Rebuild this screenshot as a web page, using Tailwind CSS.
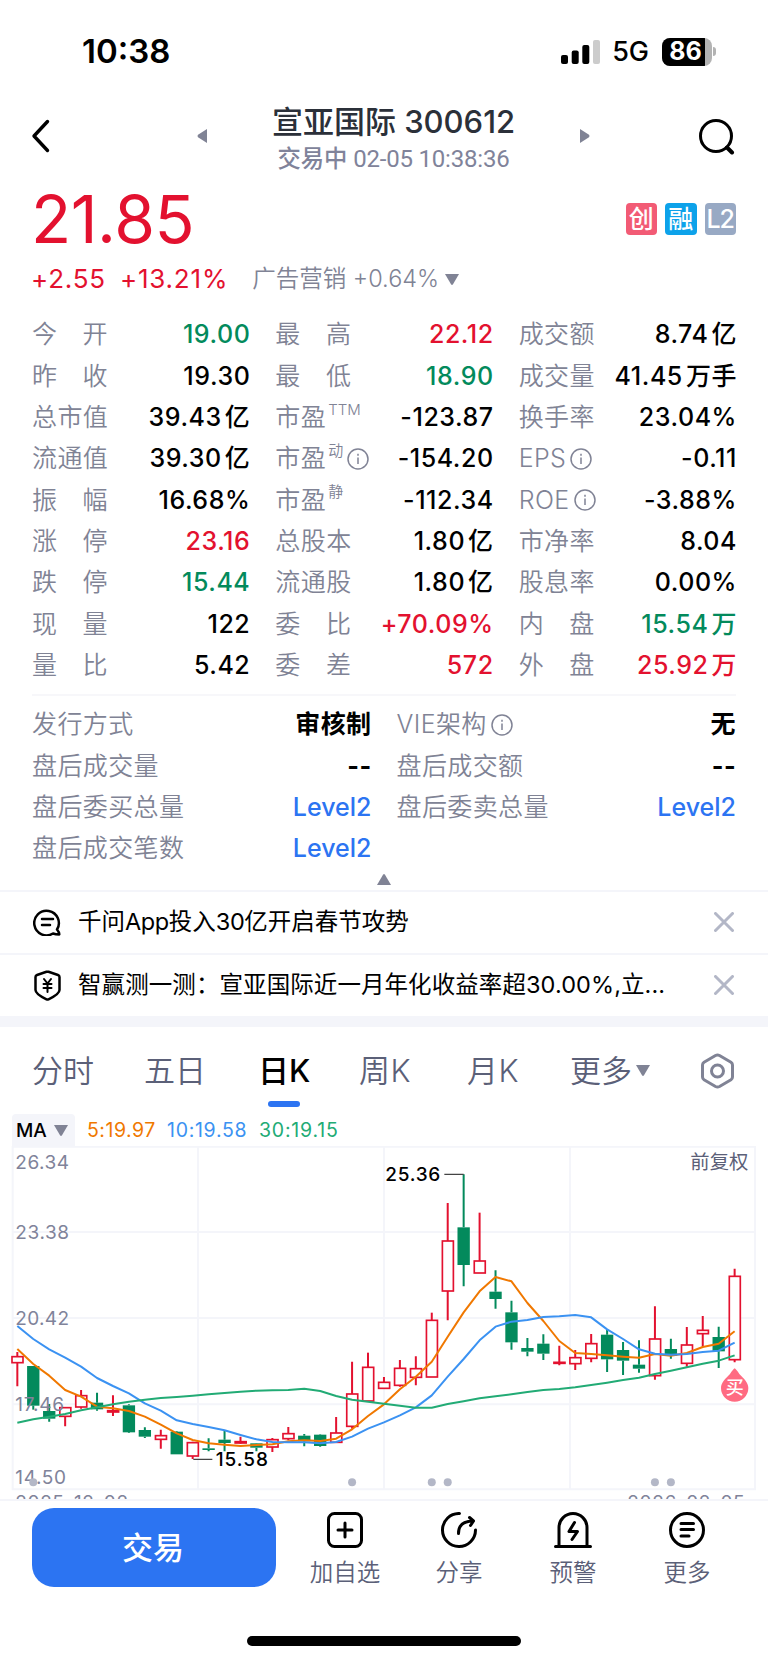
<!DOCTYPE html>
<html lang="zh-CN">

<head>
    <meta charset="UTF-8">
    <meta name="viewport" content="width=device-width, initial-scale=1.0">
    <title>宣亚国际 300612</title>
    <script src="https://cdn.jsdelivr.net/npm/@tailwindcss/browser@4"></script>
</head>

<body class="bg-white">
    <div class="w-[768px] h-[1663px] flex flex-col overflow-hidden bg-white text-black leading-none whitespace-nowrap font-[Inter,'Noto_Sans_CJK_SC',sans-serif]">

        <!-- Status bar -->
        <div class="h-[103px] shrink-0 flex justify-between items-center pl-[82px] pr-[52px]">
            <div class="text-[33px] font-semibold">10:38</div>
            <div class="flex items-center">
                <svg class="w-[39px] h-6" viewBox="0 0 39 24">
                    <rect x="0" y="15" width="7" height="9" rx="2" />
                    <rect x="10.7" y="10.5" width="7" height="13.5" rx="2" />
                    <rect x="21.3" y="5" width="7" height="19" rx="2" />
                    <rect x="32" y="0" width="7" height="24" rx="2" fill="#cccccc" />
                </svg>
                <div class="ml-3 text-[27px] font-[450]">5G</div>
                <div class="ml-[13px] w-[50px] h-7 rounded-lg overflow-hidden bg-[#b3b3b3] flex">
                    <div class="w-[43px] bg-black text-white text-[25px] font-bold flex items-center justify-center pl-1">86</div>
                </div>
                <div class="ml-[1px] w-[3px] h-[9px] rounded-r-full bg-[#b3b3b3]"></div>
            </div>
        </div>

        <!-- Title -->
        <header class="h-[75px] shrink-0 flex items-center pl-[30px] pr-[33px]">
            <svg class="w-[21px] h-9 mt-[-9px]" viewBox="0 0 21 36" fill="none" stroke="#000" stroke-width="3.4" stroke-linecap="round" stroke-linejoin="round">
                <path d="M17.5 3.500 4 18 17.500 32.500" />
            </svg>
            <div class="ml-[146px] flex items-center justify-between w-[393px]">
                <svg class="w-[10px] h-[14px] mt-[-9px]" viewBox="0 0 10 14" fill="#808395"><path d="M10 0v14L1 8.2Q0 7 1 5.8Z" /></svg>
                <div class="flex flex-col items-center">
                    <div class="text-[31px] font-medium text-[#2b3039]">宣亚国际 <span>300612</span></div>
                    <div class="mt-[6px] text-[23.3px] font-[450] text-[#80839a] font-[Roboto,'Noto_Sans_CJK_SC',sans-serif]">交易中 <span class="text-2xl tracking-[-0.2px]">02-05 10:38:36</span></div>
                </div>
                <svg class="w-[10px] h-[14px] mt-[-9px]" viewBox="0 0 10 14" fill="#808395"><path d="M0 0v14L9 8.2Q10 7 9 5.8Z" /></svg>
            </div>
            <svg class="ml-auto w-9 h-9 mt-[-8px]" viewBox="0 0 36 36" fill="none" stroke="#000" stroke-width="3" stroke-linecap="round">
                <circle cx="17" cy="17" r="15.500" />
                <path d="m28 28.500 5 5" stroke-width="4" />
            </svg>
        </header>

        <!-- Price -->
        <section class="h-[132px] shrink-0 pl-8 pr-[32px]">
            <div class="h-[82px] flex items-center justify-between">
                <div class="text-[66px] tracking-[-0.5px] -ml-px text-[#e3112f]">21.85</div>
                <div class="flex gap-2 text-white font-medium">
                    <span class="w-[31.5px] h-8 rounded bg-[#f25b75] flex items-center justify-center text-[25px]">创</span>
                    <span class="w-[31.5px] h-8 rounded bg-[#0da2ea] flex items-center justify-center text-[25px]">融</span>
                    <span class="w-[31.5px] h-8 rounded bg-[#98a9c4] flex items-center justify-center text-[25px] tracking-[-1px]">L2</span>
                </div>
            </div>
            <div class="h-[38px] flex items-center text-[26px] tracking-[0.8px] text-[#e3112f]">
                <span class="-ml-px">+2.55</span>
                <span class="ml-[14px]">+13.21%</span>
                <span class="ml-6 text-[23.5px] tracking-normal font-[350] text-[#808395]">广告营销 +0.64%</span>
                <svg class="ml-[6px] w-[14px] h-[11px]" viewBox="0 0 14 11" fill="#808395"><path d="M0 0h14L8 10.3Q7 11.5 6 10.3Z" /></svg>
            </div>
        </section>

        <!-- Quote grid, filled below -->
        <section class="h-[384px] shrink-0 px-8">
            <div id="quotes" class="mt-[4px] grid grid-cols-3 gap-x-[26px] text-[25px] tracking-[0.4px]"></div>
        </section>

        <section class="h-[196px] shrink-0 mx-8 border-t-2 border-[#f7f7fa]">
            <div id="extras" class="mt-[8px] grid grid-cols-2 gap-x-[25px] text-[25px] tracking-[0.4px]"></div>
            <svg class="mx-auto mt-[5px] w-[14px] h-[11px]" viewBox="0 0 14 11" fill="#808395"><path d="M0 11h14L8 .7Q7-.5 6 .7Z" /></svg>
        </section>

        <!-- Notices -->
        <section class="shrink-0 border-b-11 border-[#f4f5fa] text-[23.5px]">
            <div class="h-[63px] border-t-2 border-[#f4f5fa] flex items-center pb-px pl-[33px] pr-[34px]">
                <svg class="w-7 h-7" viewBox="0 0 28 28" fill="none" stroke="#000" stroke-width="2.5" stroke-linecap="round" stroke-linejoin="round">
                    <path d="M24 21.500A12.300 12.300 0 1 0 20 25.500Q22.500 26.500 26.300 26.500 26.500 24.500 24 21.500Z" />
                    <path d="M9 11h11M9 17h8" />
                </svg>
                <span class="ml-[17px]">千问<span class="tracking-[-0.4px]">App</span>投入<span class="tracking-[-0.4px]">30</span>亿开启春节攻势</span>
                <svg class="ml-auto w-5 h-5" viewBox="0 0 20 20" stroke="#b3b7c7" stroke-width="3" stroke-linecap="round"><path d="m1.5 1.5 17 17m0-17-17 17" /></svg>
            </div>
            <div class="h-[63px] border-t-2 border-[#f4f5fa] flex items-center pb-px pl-[33px] pr-[34px]">
                <svg class="w-7 h-[31px]" viewBox="0 0 28 31" fill="none" stroke="#000" stroke-width="2.5" stroke-linecap="round" stroke-linejoin="round">
                    <path d="M15.500 1.800 25 5Q26.500 5.500 26.500 7v13Q26.500 24 15.500 29.300 14.500 29.700 13.500 29.300 2.500 24 2.500 20V7Q2.500 5.500 4 5L13.500 1.800Q14.500 1.500 15.500 1.800Z" />
                    <path d="m11 9 3.500 4.500L18 9M14.500 14v8M10.500 14h8M10.500 18h8" stroke-width="2" />
                </svg>
                <span class="ml-[17px] w-[590px] tracking-[0.08px]">智赢测一测：宣亚国际近一月年化收益率超30.00%,立...</span>
                <svg class="ml-auto w-5 h-5" viewBox="0 0 20 20" stroke="#b3b7c7" stroke-width="3" stroke-linecap="round"><path d="m1.500 1.500 17 17m0-17-17 17" /></svg>
            </div>
        </section>

        <!-- Chart tabs -->
        <nav class="h-[87px] shrink-0 flex items-center text-[31px] font-[350] text-[#5b6078] pl-8 pr-[33px]">
            <span class="w-[112px]">分时</span>
            <span class="w-[114px]">五日</span>
            <span class="w-[101px] relative font-medium text-black">日K
                <i class="absolute left-[10px] top-[46px] w-8 h-[6px] rounded-full bg-[#2c74f2]"></i>
            </span>
            <span class="w-[108px] tracking-[0.5px]">周K</span>
            <span class="w-[103px] tracking-[0.5px]">月K</span>
            <span class="flex items-center">更多
                <svg class="ml-[4px] w-[14px] h-[11px]" viewBox="0 0 14 11" fill="#808395"><path d="M0 0h14L8 10.300Q7 11.500 6 10.300Z" /></svg>
            </span>
            <svg class="ml-auto w-[35px] h-9" viewBox="0 0 35 36" fill="none" stroke="#808395" stroke-width="3" stroke-linejoin="round">
                <path d="M15.500 2.500Q17.500 1.500 19.500 2.500L31 9.300Q32.500 10.300 32.500 12v12Q32.500 25.700 31 26.700L19.500 33.500Q17.500 34.500 15.500 33.500L4 26.700Q2.500 25.700 2.500 24V12Q2.500 10.300 4 9.300Z" />
                <circle cx="17.500" cy="18" r="6" />
            </svg>
        </nav>

        <!-- Moving average legend -->
        <div class="h-8 shrink-0 flex items-center pl-3 text-[19.5px]">
            <div class="h-8 w-[63px] rounded-t bg-[#f4f5fa] flex items-center pl-1 text-[19px] font-medium">MA
                <svg class="ml-[7px] w-[14px] h-[11px]" viewBox="0 0 14 11" fill="#808395"><path d="M0 0h14L8 10.300Q7 11.500 6 10.300Z" /></svg>
            </div>
            <span class="ml-3 pt-[2px] w-[80px] tracking-[0.5px] text-[#f07800]">5:19.97</span>
            <span class="pt-[2px] w-[92px] tracking-[0.7px] text-[#3b92f2]">10:19.58</span>
            <span class="pt-[2px] tracking-[0.8px] text-[#22ab75]">30:19.15</span>
        </div>

        <!-- Candles are drawn in a 3x coordinate space -->
        <svg id="chart" class="w-[768px] h-[353px] shrink-0" viewBox="0 18 2304 1059"></svg>

        <!-- Bottom bar -->
        <footer class="grow border-t-2 border-[#f4f5fa] flex flex-col bg-white">
            <div class="flex pl-8 pt-[7px]">
                <button class="w-[244px] h-[79px] pr-[2px] rounded-[22px] bg-[#2c74f2] text-white text-[31px] font-medium">交易</button>
                <div class="ml-3 flex text-[23.5px] font-[350] text-[#5b6078] text-center">
                    <div class="w-[114px] pt-1 flex flex-col items-center gap-[13px]">
                        <svg class="size-9" viewBox="0 0 36 36" fill="none" stroke="#000" stroke-width="3" stroke-linecap="round">
                            <rect x="1.500" y="1.500" width="33" height="33" rx="6" />
                            <path d="M18 11v14M11 18h14" />
                        </svg>
                        加自选
                    </div>
                    <div class="w-[114px] pt-1 flex flex-col items-center gap-[13px]">
                        <svg class="size-9" viewBox="0 0 36 36" fill="none" stroke="#000" stroke-width="3" stroke-linecap="round" stroke-linejoin="round">
                            <path d="M18.500 1.500A16.500 16.500 0 1 0 34.500 18" />
                            <path d="M17.500 21.500Q17.500 9 32 9M28.500 5.500 32.500 9 29.500 13.500" />
                        </svg>
                        分享
                    </div>
                    <div class="w-[114px] pt-1 flex flex-col items-center gap-[13px]">
                        <svg class="w-[38px] h-9" viewBox="0 0 38 36" fill="none" stroke="#000" stroke-width="3" stroke-linecap="round" stroke-linejoin="round">
                            <path d="M1.500 34.500h35M5 34V15.500a14 14 0 0 1 28 0V34" />
                            <path d="m20.500 10.500-5.500 9h8.500l-5.500 8" />
                        </svg>
                        预警
                    </div>
                    <div class="w-[114px] pt-1 flex flex-col items-center gap-[13px]">
                        <svg class="size-9" viewBox="0 0 36 36" fill="none" stroke="#000" stroke-width="3" stroke-linecap="round">
                            <circle cx="18" cy="18" r="16.500" />
                            <path d="M12 11.500h12.500M12 17.500h12.500M12 24h8" />
                        </svg>
                        更多
                    </div>
                </div>
            </div>
            <div class="mx-auto mt-[49px] w-[274px] h-[10px] rounded-full bg-black"></div>
        </footer>
    </div>

    <script>
        const UP = 'text-[#e3112f]';
        const DOWN = 'text-[#038a5c]';
        const LINK = 'text-[#2c74f2]';
        const info = `<svg class="ml-[4px] w-[22px] h-[22px]" viewBox="0 0 22 22" fill="none" stroke="#808395" stroke-width="1.5"><circle cx="11" cy="11" r="10"/><path d="M11 9.500v6.500M11 5.800v2"/></svg>`;
        const sup = t => `<span class="ml-[2px] text-[15px] tracking-normal self-start mt-[5px]">${t}</span>`;

        const quotes = [
            ['今开', '19.00', DOWN], ['最高', '22.12', UP], ['成交额', '8.74亿'],
            ['昨收', '19.30'], ['最低', '18.90', DOWN], ['成交量', '41.45万手'],
            ['总市值', '39.43亿'], ['市盈', '-123.87', '', sup('TTM')], ['换手率', '23.04%'],
            ['流通值', '39.30亿'], ['市盈', '-154.20', '', sup('动') + info], ['EPS', '-0.11', '', info],
            ['振幅', '16.68%'], ['市盈', '-112.34', '', sup('静')], ['ROE', '-3.88%', '', info],
            ['涨停', '23.16', UP], ['总股本', '1.80亿'], ['市净率', '8.04'],
            ['跌停', '15.44', DOWN], ['流通股', '1.80亿'], ['股息率', '0.00%'],
            ['现量', '122'], ['委比', '+70.09%', UP], ['内盘', '15.54万', DOWN],
            ['量比', '5.42'], ['委差', '572', UP], ['外盘', '25.92万', UP]
        ];

        document.getElementById('quotes').innerHTML = quotes.map(([label, value, color, extra]) => {
            const text = label.length === 2 && !extra
                ? `<span class="w-[76px] flex justify-between"><span>${label[0]}</span><span>${label[1]}</span></span>`
                : label;
            const num = value.replace(/[亿万手]+/, u => `<span class="ml-[3px]">${u}</span>`);
            return `<div class="h-[41.35px] flex items-center justify-between">
              <div class="h-full flex items-center font-[350] text-[#808395]">${text}${extra || ''}</div>
              <div class="-mr-px font-medium tracking-[0.55px] ${color || ''}">${num}</div>
            </div>`;
        }).join('');

        const extras = [
            ['发行方式', '审核制'], ['VIE架构', '无', '', info],
            ['盘后成交量', '--'], ['盘后成交额', '--'],
            ['盘后委买总量', 'Level2', LINK], ['盘后委卖总量', 'Level2', LINK],
            ['盘后成交笔数', 'Level2', LINK]
        ];

        document.getElementById('extras').innerHTML = extras.map(([label, value, color, extra]) =>
            `<div class="h-[41.35px] flex items-center justify-between">
              <div class="flex items-center font-[350] text-[#808395]">${label}${extra || ''}</div>
              <div class="${color ? 'font-medium tracking-normal' : 'font-bold'} ${color || ''}">${value}</div>
            </div>`).join('');
    </script>

    <script>
        // [up, high, body top, body bottom, low]
        const candles = [
            [1, 636, 650, 668, 739], [0, 678, 678, 797, 809], [0, 792, 813, 836, 845], [1, 802, 803, 829, 859],
            [1, 750, 767, 801, 806], [0, 758, 788, 808, 812], [1, 766, 812, 816, 828], [0, 793, 796, 877, 879],
            [0, 862, 870, 890, 894], [1, 869, 887, 898, 926], [0, 873, 875, 943, 943], [1, 905, 908, 948, 957],
            [0, 895, 925, 930, 934], [0, 873, 899, 909, 934], [1, 890, 905, 909, 911], [0, 909, 910, 923, 934],
            [1, 894, 899, 921, 936], [1, 861, 881, 896, 901], [0, 882, 887, 904, 919], [0, 883, 884, 918, 920],
            [1, 831, 879, 907, 907], [1, 665, 762, 859, 866], [1, 638, 682, 783, 783], [1, 711, 727, 745, 745],
            [1, 660, 685, 736, 740], [1, 649, 686, 712, 736], [1, 518, 541, 711, 711], [1, 189, 303, 453, 541],
            [0, 103, 262, 375, 439], [1, 218, 363, 399, 399], [0, 391, 455, 477, 506], [0, 482, 517, 607, 629],
            [0, 594, 624, 635, 649], [0, 583, 611, 641, 660], [1, 617, 667, 670, 676], [1, 630, 653, 671, 690],
            [1, 582, 611, 655, 667], [0, 570, 584, 658, 696], [0, 606, 630, 662, 705], [0, 601, 674, 686, 698],
            [1, 499, 597, 707, 719], [0, 596, 627, 647, 656], [1, 561, 615, 670, 680], [1, 528, 571, 581, 620],
            [0, 560, 591, 634, 684], [1, 386, 409, 659, 667]
        ];
        const ma5 = [627, 672, 707, 750, 770, 800, 805, 813, 830, 854, 880, 900, 910, 914, 918, 915, 913, 904, 901, 903, 896, 868, 828, 793, 748, 710, 665, 590, 517, 454, 411, 424, 489, 543, 603, 639, 642, 646, 650, 653, 642, 647, 639, 621, 611, 574];
        const ma10 = [558, 597, 628, 653, 680, 714, 738, 760, 790, 812, 841, 852, 861, 871, 885, 898, 906, 907, 907, 910, 906, 890, 866, 847, 826, 802, 766, 710, 657, 601, 560, 545, 540, 531, 529, 525, 532, 568, 597, 628, 641, 644, 642, 636, 632, 608];
        const ma30 = [848, 838, 830, 822, 811, 802, 793, 785, 779, 774, 771, 767, 763, 759, 755, 752, 751, 750, 746, 753, 768, 779, 785, 791, 797, 803, 803, 792, 784, 775, 769, 763, 756, 750, 747, 742, 735, 728, 720, 713, 702, 692, 682, 671, 662, 646];

        const cx = i => 52 + i * 47.82;
        let svg = `<path d="M38 20H2265V1048H38ZM38 276H2265M38 534H2265M38 793H2265M594 20V1048M1152 20V1048M1710 20V1048" fill="none" stroke="#f4f5fa" stroke-width="6"/>`;

        candles.forEach(([up, high, top, bottom, low], i) => {
            const x = cx(i);
            const color = up ? '#e3112f' : '#038a5c';
            svg += `<path d="M${x} ${high}V${top}M${x} ${bottom}V${low}" stroke="${color}" stroke-width="6"/>`;
            svg += up
                ? `<rect x="${x - 16}" y="${top}" width="33" height="${bottom - top}" fill="#fff" stroke="${color}" stroke-width="5"/>`
                : `<rect x="${x - 18.5}" y="${top}" width="37" height="${bottom - top}" fill="${color}"/>`;
        });

        [[ma5, '#f07800'], [ma10, '#3b92f2'], [ma30, '#22ab75']].forEach(([ys, color]) => {
            svg += `<polyline points="${ys.map((y, i) => cx(i) + ',' + y).join(' ')}" fill="none" stroke="${color}" stroke-width="6" stroke-linejoin="round"/>`;
        });

        [[87, '26.34'], [297, '23.38'], [556, '20.42'], [814, '17.46'], [1031, '14.50'], [1108, '2025-12-02']].forEach(([y, t]) => {
            svg += `<text x="46" y="${y}" font-size="57" fill="#80839a" textLength="${t.length > 5 ? 338 : t === '17.46' ? 146 : t === '14.50' ? 152 : 161}">${t}</text>`;
        });
        svg += `<text x="1882" y="1108" font-size="57" fill="#80839a" textLength="352">2026-02-05</text>`;
        svg += `<text x="2245" y="87" font-size="58" fill="#5b6078" text-anchor="end">前复权</text>`;

        svg += `<path d="M1333 103H1391M580 958H637" stroke="#444" stroke-width="4"/>`;
        svg += `<text x="1156" y="124" font-size="57" font-weight="500" textLength="165">25.36</text>`;
        svg += `<text x="647" y="979" font-size="57" font-weight="500" textLength="157">15.58</text>`;

        [1, 21, 26, 27, 40, 41].forEach(i => {
            svg += `<circle cx="${cx(i)}" cy="1027" r="12" fill="#b3b7c7"/>`;
        });

        svg += `<path d="M2204 685Q2209 688 2218 702C2232 716 2245 728 2245 744A41 41 0 0 1 2163 744C2163 728 2176 716 2190 702Q2199 688 2204 685Z" fill="#ff6b82"/>`;
        svg += `<text x="2204" y="763" font-size="54" font-weight="500" fill="#fff" text-anchor="middle">买</text>`;
        document.getElementById('chart').innerHTML = svg;
    </script>
</body>

</html>
